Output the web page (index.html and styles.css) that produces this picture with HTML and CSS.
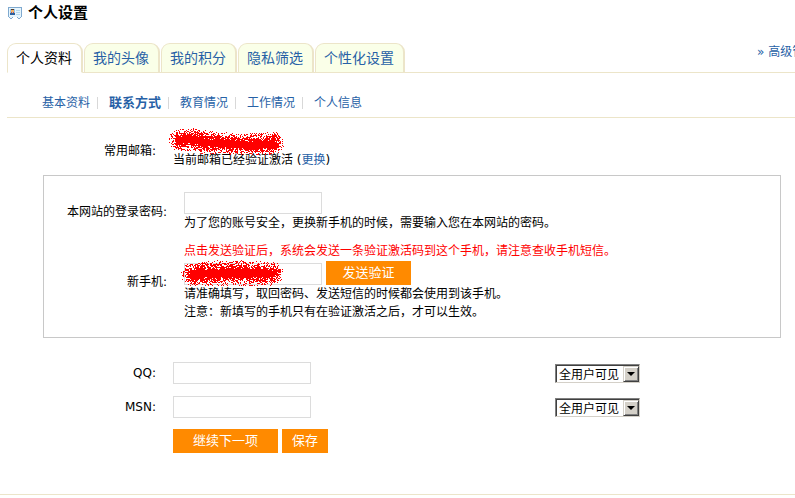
FILE: index.html
```html
<!DOCTYPE html>
<html lang="zh-CN">
<head>
<meta charset="utf-8">
<title>个人设置</title>
<link rel="stylesheet" href="styles.css">
</head>
<body>
<div class="page">
  <header class="title-bar">
    <svg class="title-icon" width="14" height="12" viewBox="0 0 14 12" shape-rendering="crispEdges" aria-hidden="true">
      <path fill="#7fa9cf" d="M0 0h14v10h-1v1h-1v1h-2v-1h-1v-1h-4v1h-1v1h-2v-1h-1v-1h-1z"/>
      <path fill="#e6f5fd" d="M1 1h12v9h-1v1h-2v-1h-6v1h-2v-1h-1z"/>
      <path fill="#8fc6f0" d="M2 2h5v6h-5z"/>
      <path fill="#5b3a20" d="M3 2h3v1h-3z"/>
      <path fill="#f3b268" d="M3 3h3v2h-3z"/>
      <path fill="#d9532c" d="M3 5h1v1h-1zM5 5h1v1h-1z"/>
      <path fill="#2c5f9c" d="M2 6h5v2h-5z"/>
      <path fill="#b4d8ee" d="M8 3h4v1h-4zM8 5h4v1h-4zM8 7h4v1h-4z"/>
    </svg>
    <h1 class="title">个人设置</h1>
  </header>

  <nav class="tabs">
    <a class="tab tab-active" href="#">个人资料</a>
    <a class="tab" href="#">我的头像</a>
    <a class="tab" href="#">我的积分</a>
    <a class="tab" href="#">隐私筛选</a>
    <a class="tab" href="#">个性化设置</a>
    <a class="advanced" href="#">» 高级管</a>
  </nav>

  <nav class="subnav">
    <a class="subnav-link" href="#">基本资料</a>
    <a class="subnav-link subnav-current" href="#">联系方式</a>
    <a class="subnav-link" href="#">教育情况</a>
    <a class="subnav-link" href="#">工作情况</a>
    <a class="subnav-link" href="#">个人信息</a>
  </nav>

  <form class="form">
    <div class="row">
      <span class="label">常用邮箱:</span>
      <div class="field">
        <div class="line masked"><svg class="spray spray-mail" width="120" height="30" shape-rendering="crispEdges" aria-hidden="true"></svg></div>
        <div class="line">当前邮箱已经验证激活 (<a href="#">更换</a>)</div>
      </div>
    </div>

    <div class="panel">
      <div class="row">
        <label class="label" for="password">本网站的登录密码:</label>
        <div class="field">
          <input class="text" type="password" id="password">
          <div class="line">为了您的账号安全，更换新手机的时候，需要输入您在本网站的密码。</div>
        </div>
      </div>
      <div class="row">
        <label class="label" for="mobile">新手机:</label>
        <div class="field">
          <div class="line warning">点击发送验证后，系统会发送一条验证激活码到这个手机，请注意查收手机短信。</div>
          <div class="controls masked">
            <input class="text" type="text" id="mobile">
            <button class="button button-send" type="button">发送验证</button>
            <svg class="spray spray-mobile" width="108" height="30" shape-rendering="crispEdges" aria-hidden="true"></svg>
          </div>
          <div class="line">请准确填写，取回密码、发送短信的时候都会使用到该手机。</div>
          <div class="line">注意：新填写的手机只有在验证激活之后，才可以生效。</div>
        </div>
      </div>
    </div>

    <div class="contacts">
      <div class="row">
        <label class="label" for="qq">QQ:</label>
        <div class="field"><input class="text" type="text" id="qq"></div>
        <div class="visibility">
          <select class="select" aria-label="QQ"><option>全用户可见</option></select>
          <span class="arrow"></span>
        </div>
      </div>
      <div class="row">
        <label class="label" for="msn">MSN:</label>
        <div class="field"><input class="text" type="text" id="msn"></div>
        <div class="visibility">
          <select class="select" aria-label="MSN"><option>全用户可见</option></select>
          <span class="arrow"></span>
        </div>
      </div>
    </div>

    <div class="actions">
      <button class="button button-next" type="submit">继续下一项</button>
      <button class="button button-save" type="submit">保存</button>
    </div>
  </form>
</div>
<footer class="footer"></footer>
<script src="spray.js"></script>
</body>
</html>
```
FILE: styles.css
```css
* {
  box-sizing: border-box;
}

body {
  margin: 0;
  background: #fff;
  color: #000;
  font: 12px/18px "DejaVu Sans", "Noto Sans CJK SC", sans-serif;
  overflow-x: hidden;
}

a {
  color: #2761a6;
  text-decoration: none;
}

.page {
  padding-left: 7px;
}

.title-bar {
  display: flex;
  align-items: center;
  gap: 6px;
  padding: 3px 0 0 1px;
}

.title {
  margin: 0;
  font-size: 15px;
  line-height: 20px;
}

.tabs {
  display: flex;
  gap: 1px;
  height: 30px;
  margin-top: 20px;
  border-bottom: 1px solid #ece5c9;
}

.tab {
  height: 30px;
  padding: 0 9px 0 8px;
  border: 1px solid #ece5c9;
  border-right-width: 2px;
  border-radius: 9px 9px 0 0;
  background: #faffe8;
  font-size: 14px;
  line-height: 28px;
  white-space: nowrap;
}

.tab-active {
  border-bottom-color: #fff;
  background: #fff;
  color: #000;
}

.advanced {
  width: 38px;
  margin-left: auto;
  overflow: hidden;
  white-space: nowrap;
}

.subnav {
  display: flex;
  align-items: center;
  padding: 24px 0 8px 35px;
  border-bottom: 1px solid #ece5c9;
}

.subnav-link {
  margin-right: 11px;
  padding-right: 7px;
  border-right: 1px solid #d8d8d8;
  line-height: 12px;
  white-space: nowrap;
}

.subnav-link:last-child {
  border-right: 0;
}

.subnav-current {
  font-size: 13px;
  font-weight: bold;
}

.form {
  padding-top: 15px;
}

.row {
  display: flex;
  align-items: center;
}

.label {
  width: 149px;
  margin-right: 17px;
  text-align: right;
}

.line {
  min-height: 18px;
}

.masked {
  position: relative;
}

.warning {
  color: #f00;
}

.panel {
  display: grid;
  gap: 10px;
  margin: 6px 14px 0 36px;
  padding: 16px 0;
  border: 1px solid #c8c8c8;
}

.panel .label {
  width: 123px;
}

.text {
  display: block;
  width: 138px;
  height: 22px;
  margin: 0;
  padding: 0 4px;
  border: 1px solid #dcdcdc;
  background: #fff;
  font: inherit;
}

.controls {
  display: flex;
  align-items: flex-end;
  gap: 4px;
  padding-top: 1px;
}

.button {
  height: 24px;
  padding: 0 0 2px;
  border: 0;
  background: #ff8a00;
  color: #fff;
  font: 13px/22px "Noto Sans CJK SC", sans-serif;
}

.button-send {
  width: 85px;
}

.button-next {
  width: 105px;
}

.button-save {
  width: 46px;
}

.contacts {
  display: grid;
  gap: 12px;
  margin-top: 24px;
}

.contacts .field {
  flex: 1;
}

.visibility {
  position: relative;
  width: 85px;
  margin-right: 155px;
}

.select {
  display: block;
  width: 100%;
  height: 19px;
  margin: 0;
  padding: 0 0 0 3px;
  appearance: none;
  border: 1px solid;
  border-color: #808080 #d4d0c8 #d4d0c8 #808080;
  border-radius: 0;
  background: #fff;
  box-shadow: inset 1px 1px #404040;
  color: #000;
  font: 12px/17px "Noto Sans CJK SC", sans-serif;
}

.arrow {
  position: absolute;
  top: 2px;
  right: 1px;
  display: flex;
  align-items: center;
  justify-content: center;
  width: 16px;
  height: 16px;
  border: 1px solid;
  border-color: #d4d0c8 #404040 #404040 #d4d0c8;
  background: #d4d0c8;
  box-shadow: inset 1px 1px #fff, inset -1px -1px #808080;
  pointer-events: none;
}

.arrow::before {
  content: "";
  border: 4px solid transparent;
  border-top-color: #000;
  border-bottom: 0;
}

.actions {
  display: flex;
  gap: 4px;
  padding: 11px 0 41px 166px;
}

.footer {
  border-top: 1px solid #ece5c9;
}

.spray {
  position: absolute;
  fill: #f00;
}

.spray-mail {
  top: -6px;
  left: -6px;
}

.spray-mobile {
  top: -1px;
  left: -4px;
}
```
FILE: spray.js
```js
function spray(selector, points, seed) {
  var svg = document.querySelector(selector);
  var w = +svg.getAttribute("width");
  var h = +svg.getAttribute("height");
  function rand() {
    seed = (seed * 1103515245 + 12345) % 2147483648;
    return seed / 2147483648;
  }
  var d = "";
  for (var y = 0; y < h; y++) {
    for (var x = 0; x < w; x++) {
      var near = 2;
      points.forEach(function (p) {
        near = Math.min(near, Math.hypot(x - p[0], y - p[1]) / p[2]);
      });
      if (near < 1 && rand() < 0.12 + 1.15 * (1 - near)) {
        d += "M" + x + " " + y + "h1v1h-1z";
      }
    }
  }
  var path = document.createElementNS("http://www.w3.org/2000/svg", "path");
  path.setAttribute("d", d);
  svg.appendChild(path);
}

function stroke(knots) {
  var out = [];
  for (var i = 1; i < knots.length; i++) {
    for (var t = 0; t <= 1; t += 0.1) {
      out.push(knots[i - 1].map(function (v, k) {
        return v + (knots[i][k] - v) * t;
      }));
    }
  }
  return out;
}

spray(".spray-mail", stroke([[12, 13, 11], [24, 12, 12], [38, 15, 12], [60, 16, 11], [82, 17, 11], [105, 16, 12]]), 7);
spray(".spray-mobile", stroke([[12, 15, 12], [30, 14, 13], [50, 13, 13], [70, 14, 13], [91, 14, 12]]), 21);
```
